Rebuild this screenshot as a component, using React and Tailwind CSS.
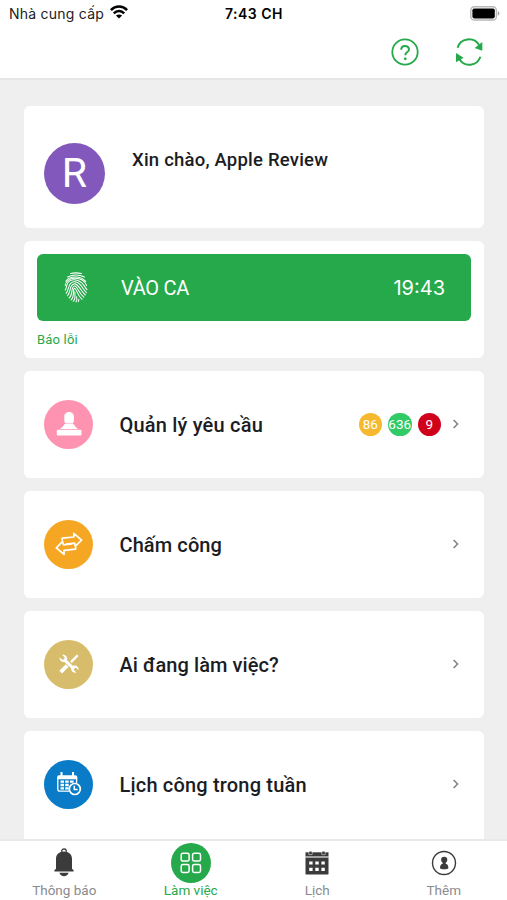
import React from 'react';

function WifiIcon() {
  return (
    <svg width="18" height="14" viewBox="0 0 18 14" fill="none" stroke="#000" strokeWidth="2.5">
      <path d="M0.9 5.1C5.4 0.4 12.6 0.4 17.1 5.1" />
      <path d="M3.8 8.4C6.8 5.3 11.2 5.3 14.2 8.4" />
      <path d="M9 13.6L5.9 10.6C7.7 9 10.3 9 12.1 10.6Z" fill="#000" stroke="none" />
    </svg>
  );
}

function BatteryIcon() {
  return (
    <svg width="32" height="15" viewBox="0 0 32 15">
      <rect x="1.8" y="0.8" width="25.6" height="13.2" rx="3.6" fill="#fff" stroke="#b8b8b8" strokeWidth="1.4" />
      <rect x="3.4" y="2.4" width="22.4" height="10" rx="1.8" fill="#000" />
      <path d="M28.8 5.2C31 5.8 31 9 28.8 9.6Z" fill="#a8a8a8" />
    </svg>
  );
}

function HelpIcon() {
  return (
    <svg width="28" height="28" viewBox="0 0 28 28" fill="none" stroke="#26a94b" strokeWidth="1.8">
      <circle cx="14" cy="14" r="12.7" />
      <path d="M10.2 11.7C10.2 6.9 18 6.9 18 11.4C18 14.4 14.3 13.7 14.3 17.3" strokeWidth="2" />
      <circle cx="14.3" cy="20.8" r="1.4" fill="#26a94b" stroke="none" />
    </svg>
  );
}

function RefreshIcon() {
  return (
    <svg width="28" height="28" viewBox="0 0 28 28" fill="none" stroke="#26a94b" strokeWidth="2">
      <path d="M2.6 9.8C5.3 -0.2 18.8 -1.6 24.2 7.2" />
      <path d="M25.4 18.7C22.2 28.2 9.5 29.9 4.1 20.8" />
      <path d="M27.3 4V12.8L19.6 9.9Z" fill="#26a94b" stroke="none" />
      <path d="M1 15L8.6 19.8L1 24.3Z" fill="#26a94b" stroke="none" />
    </svg>
  );
}

function FingerprintIcon() {
  return (
    <svg width="24" height="31" viewBox="0 0 24 31" fill="none" stroke="#fff" strokeWidth="1.05" strokeLinecap="round">
      <path d="M6.5 1.5Q12 0.3 17.5 1.5" />
      <path d="M3.6 5Q12 0.9 20.4 5" />
      <path d="M1.9 9.2C5 3.8 17 3.1 21.6 9.4" />
      <path d="M1.2 13.6C1.8 4.5 18.3 3.4 22.6 13.5" />
      <path d="M1.2 18.2C3.4 15.2 1.7 8.6 9.2 7.8C16 7.1 19.3 12.2 22.9 17.7" />
      <path d="M2.1 21.3C5.2 18.5 3.4 10.6 9.8 9.8C15.5 9.1 17.7 15.4 22.4 20.6" />
      <path d="M3.4 23.8C7.3 20.3 4.9 12.5 10.1 11.9C14.6 11.4 15.8 18 21.3 23" />
      <path d="M5.1 26C9.3 22.6 6.7 14.4 10.4 14C13.5 13.6 13.9 20.1 19.8 25.2" />
      <path d="M7.1 27.9C11 25 8.3 16.9 10.4 16.2C12.3 15.6 12.4 22.4 18.1 27.3" />
      <path d="M9.2 29.3C11.8 27.4 11 23.5 10.8 19.8M12 29.9C13 28.6 13 26.5 12.6 24.8M14.3 29.5L14.9 27.3" />
    </svg>
  );
}

function StampIcon() {
  return (
    <svg width="26" height="26" viewBox="0 0 26 26" fill="#fff">
      <path d="M8.3 5.6C8.3 -0.5 17.9 -0.5 17.9 5.6V9.5C17.9 11 17.1 11.4 16.9 12.4H9.3C9.1 11.4 8.3 11 8.3 9.5Z" />
      <path d="M8.6 12.9H17.6C18.8 15.2 20.4 16.6 22.2 18H3.8C5.8 16.6 7.2 15.2 8.6 12.9Z" />
      <rect x="0.8" y="18.8" width="24.6" height="5.7" rx="1" />
    </svg>
  );
}

function SwapIcon() {
  return (
    <svg width="28" height="24" viewBox="0 0 28 24" fill="none" stroke="#fff" strokeWidth="1.7" strokeLinejoin="round" strokeLinecap="round">
      <path d="M7.2 8V6.2L18.8 5V1.4L26.6 8.2L20.4 14.2L19.6 11.1L11.5 12" />
      <path d="M20.6 15V17.2L9 18.4V22.4L1.3 15.8L7.6 9.4L8.4 12.8L16.5 12" />
    </svg>
  );
}

function ToolsIcon() {
  return (
    <svg width="20" height="20" viewBox="0 0 22 22" fill="none" stroke="#fff">
      <path d="M5.5 6L16.5 16.5" strokeWidth="3.4" />
      <path d="M3.2 0.9L6.3 3.8L5.6 5.7L3.6 6.2L0.7 3.5C0.1 7.5 3.6 9.8 7.2 8.2L8.8 6.7C10 3 6.9 -0.1 3.2 0.9Z" fill="#fff" stroke="none" />
      <path d="M19.2 20.4L16.2 17.6L16.8 15.6L18.8 15.2L21.5 17.8C22 14.1 18.7 11.6 15.3 13.1L13.6 14.6C12.4 18.2 15.5 21.4 19.2 20.4Z" fill="#fff" stroke="none" />
      <path d="M20.6 1.4L13.2 9" strokeWidth="2.6" />
      <path d="M9 12.6L1.9 20" strokeWidth="4.2" />
    </svg>
  );
}

function ScheduleIcon() {
  return (
    <svg width="26" height="26" viewBox="0 0 26 26" fill="none" stroke="#fff">
      <path d="M14 20.2H4C2.5 20.2 1.8 19.5 1.8 18V7H20.6V12" strokeWidth="1.3" />
      <path d="M1.2 8.2V6Q1.2 4.2 3 4.2H19.4Q21.2 4.2 21.2 6V8.2Z" fill="#fff" stroke="none" />
      <path d="M5.5 1V5M17 1V5" strokeWidth="2" />
      <path d="M4.5 10.7H8M9.2 10.7H12.7M13.9 10.7H17.6M4.5 14H8M9.2 14H12.7M4.5 17.3H8M9.2 17.3H12.5" strokeWidth="2.3" />
      <circle cx="18.8" cy="18" r="5.5" fill="#0a7cc7" strokeWidth="1.7" />
      <path d="M18.3 14.7V18.6H21.6" strokeWidth="1.5" />
    </svg>
  );
}

function ChevronIcon() {
  return (
    <svg width="8" height="10" viewBox="0 0 8 10" fill="none" stroke="#808080" strokeWidth="1.5">
      <path d="M1.6 1L5.6 5L1.6 9" />
    </svg>
  );
}

function BellIcon() {
  return (
    <svg width="20" height="30" viewBox="0 0 20 30" fill="#3b3b3b">
      <path d="M7.8 4V2.8C7.8 0.4 12.2 0.4 12.2 2.8V4" fill="none" stroke="#3b3b3b" strokeWidth="1.3" />
      <path d="M2 20.7V10.8C2 6.2 5.3 3.4 10 3.4S18 6.2 18 10.8V20.7L19.6 22.3V23.4H0.4V22.3Z" />
      <path d="M5.4 24.8H14.6C13.6 29.4 6.4 29.4 5.4 24.8Z" />
    </svg>
  );
}

function GridIcon() {
  return (
    <svg width="22" height="22" viewBox="0 0 22 22" fill="none" stroke="#fff" strokeWidth="1.5">
      <rect x="1.2" y="1.2" width="7.9" height="7.9" rx="1.7" />
      <rect x="12.6" y="1.2" width="7.9" height="7.9" rx="1.7" />
      <rect x="1.2" y="12.6" width="7.9" height="7.9" rx="1.7" />
      <rect x="12.6" y="12.6" width="7.9" height="7.9" rx="1.7" />
    </svg>
  );
}

function CalendarIcon() {
  return (
    <svg width="24" height="24" viewBox="0 0 24 24" fill="#3b3b3b">
      <path d="M0.5 1.3H23.5V5.4H0.5Z" />
      <path d="M0.5 6.8H23.5V22.4Q23.5 23.6 22.3 23.6H1.7Q0.5 23.6 0.5 22.4Z" />
      <path d="M0.5 5.4H23.5V6.8H0.5Z" fill="#999" />
      <path d="M3.9 1V3.6H7.1V1M16.9 1V3.6H20.1V1" fill="none" stroke="#fff" strokeWidth="0.6" />
      <path d="M4.4 0.5H6.6V3.2H4.4ZM17.4 0.5H19.6V3.2H17.4Z" />
      <path d="M4.2 10.4H7.6V13.6H4.2ZM10.3 10.4H13.7V13.6H10.3ZM16.4 10.4H19.8V13.6H16.4ZM4.2 16.8H7.6V20H4.2ZM10.3 16.8H13.7V20H10.3ZM16.4 16.8H19.8V20H16.4Z" fill="#fff" />
    </svg>
  );
}

function UserIcon() {
  return (
    <svg width="26" height="26" viewBox="0 0 26 26" fill="#3b3b3b">
      <circle cx="13" cy="13" r="11.5" fill="none" stroke="#3b3b3b" strokeWidth="1.4" />
      <circle cx="13.2" cy="9.8" r="3.1" />
      <path d="M11.7 12H14.7V13.7C16.7 14.2 17.4 15.5 17.4 18C17.4 19.8 9 19.8 9 18C9 15.5 9.7 14.2 11.7 13.7Z" />
    </svg>
  );
}

const badges = [
  { value: '86', color: 'bg-[#f6b82e]' },
  { value: '636', color: 'bg-[#31ca67]' },
  { value: '9', color: 'bg-[#d0021b]' },
];

const menu = [
  { title: 'Quản lý yêu cầu', color: 'bg-[#fe92b1]', Icon: StampIcon, tracking: 'tracking-[0.2px]', badges },
  { title: 'Chấm công', color: 'bg-[#f5a623]', Icon: SwapIcon, tracking: 'tracking-[0.1px]' },
  { title: 'Ai đang làm việc?', color: 'bg-[#d7bc6c]', Icon: ToolsIcon, tracking: 'tracking-[0.08px]' },
  { title: 'Lịch công trong tuần', color: 'bg-[#0a7cc7]', Icon: ScheduleIcon, tracking: 'tracking-[0.18px]' },
];

const tabs = [
  { label: 'Thông báo', Icon: BellIcon },
  { label: 'Làm việc', Icon: GridIcon, active: true },
  { label: 'Lịch', Icon: CalendarIcon },
  { label: 'Thêm', Icon: UserIcon },
];

function MenuCard({ item }) {
  const { title, color, Icon, tracking } = item;

  return (
    <div className="shrink-0 rounded-[6px] bg-white pl-5 pr-6 last:pb-4">
      <div className="flex h-[107.5px] items-center">
        <div className={`flex size-[49px] items-center justify-center rounded-full ${color}`}>
          <Icon />
        </div>
        <span className={`ml-[26.5px] mt-[1.5px] text-[20px] font-medium leading-6 text-[#1b1d24] ${tracking}`}>{title}</span>
        <div className="ml-auto flex items-center gap-[6px]">
          {item.badges?.map((badge) => (
            <span
              key={badge.value}
              className={`flex size-[23.5px] items-center justify-center rounded-full text-[13.5px] text-white ${badge.color}`}
            >
              {badge.value}
            </span>
          ))}
          <span className="ml-[5px]"><ChevronIcon /></span>
        </div>
      </div>
    </div>
  );
}

export default function App() {
  return (
    <div className="flex h-[900px] w-[507px] flex-col overflow-hidden whitespace-nowrap bg-[#efefef] font-['Roboto',sans-serif]">
      <header className="h-20 shrink-0 border-b-2 border-[#e5e5e5] bg-white">
        <div className="grid h-7 grid-cols-3 items-center pl-[9px] pr-[6px] font-['Inter',sans-serif] text-[14px] text-[#222]">
          <div className="-mt-[2px] flex items-center gap-[6px]">
            <span className="tracking-[0.24px]">Nhà cung cấp</span>
            <span className="-mt-[2px]"><WifiIcon /></span>
          </div>
          <span className="-mt-[2px] pr-[2px] text-center text-[14px] font-semibold tracking-[0.5px] text-black">7:43 CH</span>
          <span className="-mt-px justify-self-end"><BatteryIcon /></span>
        </div>
        <div className="flex h-[48px] items-center justify-end gap-9 pr-[24px]">
          <HelpIcon />
          <RefreshIcon />
        </div>
      </header>

      <main className="flex min-h-0 flex-1 flex-col gap-[12.5px] overflow-hidden pl-6 pr-[23px] pt-[26px]">
        <section className="flex h-[122px] shrink-0 rounded-[6px] bg-white pl-5 pt-[37px]">
          <div className="flex size-[61px] items-center justify-center rounded-full bg-[#8358bd] text-[41px] text-white">
            R
          </div>
          <h1 className="ml-[27px] mt-[5px] text-[18.5px] font-medium leading-6 tracking-[0.21px] text-[#1b1d24]">Xin chào, Apple Review</h1>
        </section>

        <section className="h-[117.5px] shrink-0 rounded-[6px] bg-white px-[13px] pt-[13.5px]">
          <button className="flex h-[67px] w-full items-center rounded-[6px] bg-[#26a94b] pl-[27px] pr-[26px] text-[20px] text-white">
            <FingerprintIcon />
            <span className="ml-[33px] tracking-[-0.3px]">VÀO CA</span>
            <span className="ml-auto font-['Inter',sans-serif] text-[20px]">19:43</span>
          </button>
          <p className="mt-[9px] text-[13px] leading-5 tracking-[0.2px] text-[#26a94b]">Báo lỗi</p>
        </section>

        {menu.map((item) => (
          <MenuCard key={item.title} item={item} />
        ))}
      </main>

      <nav className="grid h-[61px] shrink-0 grid-cols-4 border-t-2 border-[#e9e9e9] bg-white pl-px">
        {tabs.map(({ label, Icon, active }) => (
          <div key={label} className={`flex flex-col items-center pt-[2px] text-[13.5px] ${active ? 'text-[#26a94b]' : 'text-[#8a8a8f]'}`}>
            <span className={`flex size-10 items-center justify-center rounded-full ${active ? 'bg-[#26a94b]' : ''}`}>
              <Icon />
            </span>
            <span className="-mt-px leading-4">{label}</span>
          </div>
        ))}
      </nav>
    </div>
  );
}
